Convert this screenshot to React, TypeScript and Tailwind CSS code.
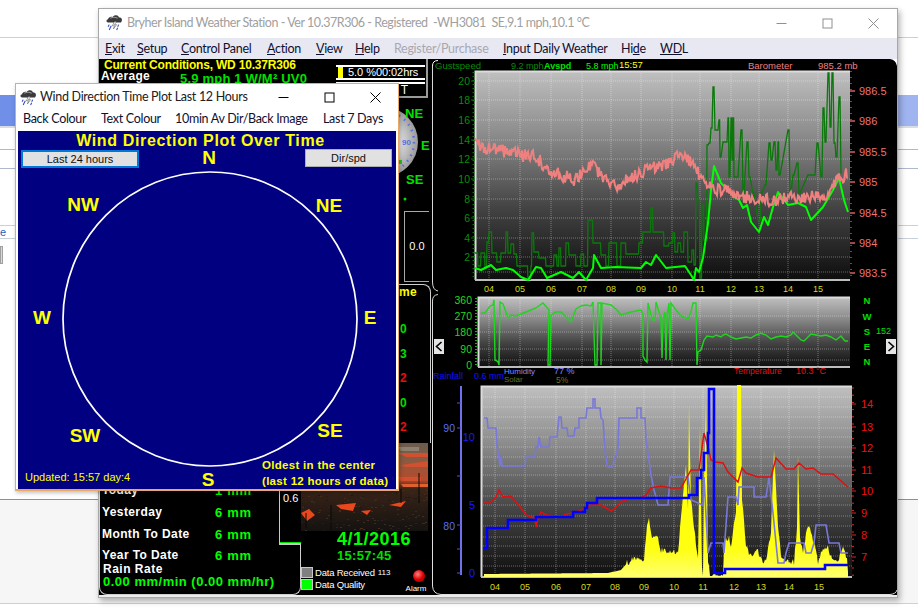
import React from "react";

type P = [number, number];
const SANS = "Liberation Sans, sans-serif";

function mkRnd(seed: number) {
  let s = seed;
  return () => {
    s = (s * 16807) % 2147483647;
    return s / 2147483647;
  };
}
function interp(k: P[], x: number) {
  for (let i = 1; i < k.length; i++) {
    if (x <= k[i][0]) {
      const [a, b] = k[i - 1];
      const [c, d] = k[i];
      return b + ((d - b) * (x - a)) / Math.max(c - a, 0.01);
    }
  }
  return k[k.length - 1][1];
}
const pts = (a: P[]) => a.map((p) => p.join(",")).join(" ");
const steps = (a: P[]) => "M" + a[0].join(" ") + a.slice(1).map((p) => ` H${p[0]} V${p[1]}`).join("");
const plateaus = (a: P[]) => {
  const o: P[] = [];
  a.forEach(([x, y], i) => {
    const next = i + 1 < a.length ? a[i + 1][0] : x + 1;
    const end = y < 200 ? Math.min(x + 1, next - 0.4) : next - 0.5;
    o.push([x, y], [end, y]);
  });
  return o;
};

const baroKeys: P[] = [[474,145],[490,148],[519,155],[535,157],[550,172],[575,180],[590,165],[600,175],[615,187],[640,172],[660,165],[673,160],[683,153],[697,173],[710,187],[743,197],[770,200],[803,197],[823,197],[833,183],[846,173]];
const baro: P[] = (() => {
  const r = mkRnd(77);
  const o: P[] = [];
  for (let x = 474; x <= 846; x += 1) o.push([x, interp(baroKeys, x) + (r() - 0.5) * 13]);
  return o;
})();
const avg: P[] = [[474,268],[480,270],[490,265],[495,270],[505,268],[512,270],[520,277],[527,280],[535,267],[540,268],[546,278],[560,272],[572,278],[578,272],[585,280],[592,268],[593,255],[600,268],[615,267],[640,268],[645,262],[650,265],[655,255],[665,268],[684,266],[690,275],[693,280],[695,268],[698,272],[702,258],[707,223],[710,190],[713,166],[720,183],[727,190],[733,197],[738,200],[742,208],[746,205],[750,222],[758,232],[763,217],[767,225],[772,207],[777,192],[787,205],[797,203],[805,207],[810,220],[822,207],[832,190],[838,178],[843,200],[847,212]];
const gust: P[] = [[474,253],[477,266],[480,253],[484,268],[486,242],[488,232],[491,253],[496,262],[500,253],[505,232],[507,253],[510,244],[513,254],[516,266],[527,279],[530,266],[531,233],[533,252],[538,258],[545,266],[552,266],[553,255],[556,266],[558,248],[560,266],[565,243],[568,255],[572,255],[575,266],[580,254],[583,266],[587,220],[592,243],[598,243],[600,255],[605,266],[608,243],[612,243],[616,266],[620,243],[625,254],[633,254],[638,243],[642,232],[650,208],[652,232],[660,232],[663,246],[668,243],[672,233],[674,252],[677,243],[680,252],[683,232],[687,262],[691,250],[693,265],[695,183],[697,200],[699,278],[701,205],[703,240],[706,145],[708,143],[710,128],[712,87],[714,130],[716,130],[718,120],[719,157],[722,142],[725,142],[727,118],[728,177],[730,118],[731,160],[732,118],[733,177],[736,177],[740,130],[742,193],[746,142],[748,177],[752,193],[757,220],[760,193],[764,185],[768,143],[770,160],[773,142],[775,170],[777,142],[778,175],[787,130],[789,193],[792,175],[796,163],[798,193],[807,175],[813,175],[816,143],[820,177],[822,108],[824,142],[827,73],[829,127],[831,73],[833,143],[835,157],[838,97],[840,173]];
const dir: P[] = [[480,313],[484,313],[489,306],[492,305],[493,300],[494,360],[496,361],[497,362],[498,365],[499,302],[502,304],[505,312],[507,318],[510,315],[515,316],[520,314],[525,312],[530,310],[535,308],[542,303],[548,310],[547,365],[549,365],[550,315],[555,312],[560,312],[568,320],[570,322],[575,309],[580,306],[585,305],[590,306],[592,302],[594,365],[596,365],[597,303],[600,303],[600,365],[601,303],[610,305],[616,310],[620,315],[630,312],[640,310],[642,315],[642,356],[644,360],[646,362],[647,303],[650,315],[652,320],[654,320],[655,302],[658,312],[660,320],[661,358],[662,320],[664,312],[665,360],[666,315],[668,303],[669,360],[670,303],[675,310],[680,316],[685,318],[687,319],[690,312],[692,303],[695,303],[696,365],[697,352],[700,350],[703,340],[706,336],[712,337],[715,335],[720,337],[722,335],[725,334],[730,337],[735,339],[740,338],[745,337],[750,338],[755,335],[760,333],[762,334],[765,335],[770,339],[775,337],[780,336],[785,337],[790,335],[792,332],[796,336],[800,340],[803,341],[806,338],[810,334],[815,335],[820,336],[825,335],[830,337],[835,340],[840,336],[844,341],[847,341]];
const hum: P[] = [[483,418],[486,418],[487,428],[495,428],[496,446],[498,458],[499,466],[500,456],[501,466],[524,466],[525,457],[534,457],[535,447],[537,447],[538,437],[540,447],[548,447],[549,437],[556,437],[558,417],[560,417],[561,428],[566,428],[567,436],[573,436],[574,428],[578,428],[578,418],[585,418],[586,408],[592,408],[592,399],[594,399],[594,408],[599,408],[600,418],[602,420],[603,435],[604,450],[606,465],[607,467],[612,467],[613,460],[615,455],[617,448],[618,418],[636,418],[636,408],[640,408],[640,418],[644,418],[645,440],[648,460],[650,475],[653,490],[655,497],[657,505],[667,505],[669,477],[687,477],[690,500],[702,505],[703,477],[707,553],[710,543],[722,543],[723,553],[727,497],[735,497],[737,505],[738,487],[753,487],[753,497],[765,497],[768,477],[772,513],[777,563],[783,563],[785,553],[788,543],[803,543],[805,553],[810,553],[813,543],[815,525],[825,525],[828,543],[838,543],[840,553],[847,553]];
const temp: P[] = [[483,502],[490,502],[495,497],[498,490],[502,497],[510,496],[515,502],[520,508],[525,515],[530,517],[534,518],[535,527],[537,518],[540,512],[545,515],[555,516],[560,517],[565,514],[572,513],[580,510],[585,508],[590,505],[600,505],[605,508],[610,511],[614,508],[620,502],[630,498],[640,498],[645,495],[650,488],[660,486],[670,488],[680,488],[690,470],[698,470],[703,433],[707,447],[710,460],[715,462],[722,463],[727,472],[737,482],[741,468],[745,473],[757,477],[770,477],[775,458],[785,469],[793,469],[798,463],[805,469],[812,468],[820,474],[832,474],[847,487]];
const rain: P[] = [[483,548],[486,528],[507,520],[535,517],[572,512],[584,508],[586,503],[596,498],[688,495],[696,478],[700,470],[703,453],[707,433],[708,389],[713,573],[724,569],[824,565],[847,565]];
const sunKeys: P[] = [[483,574],[607,573],[620,570],[627,562],[630,560],[640,558],[643,561],[646,523],[648,520],[650,535],[657,540],[660,550],[670,552],[677,552],[680,515],[685,465],[687,510],[688,405],[690,500],[697,560],[699,425],[701,565],[702,575],[703,480],[705,400],[707,560],[709,575],[722,575],[723,545],[728,535],[730,548],[735,510],[736,385],[740,385],[741,500],[745,545],[748,555],[757,552],[760,560],[765,562],[770,530],[773,450],[777,525],[780,555],[787,560],[793,562],[796,530],[797,455],[799,540],[802,550],[805,535],[808,525],[812,540],[817,562],[822,548],[827,548],[830,558],[837,560],[842,545],[846,560],[847,575]];
const sun: P[] = (() => {
  const r = mkRnd(311);
  const o: P[] = [[483, 577]];
  for (let x = 483; x <= 847; x++) {
    const y = interp(sunKeys, x);
    o.push([x, y > 500 && x > 625 ? Math.min(576, y + (r() - 0.5) * 7) : y]);
  }
  o.push([847, 577]);
  return o;
})();

const hoursA = [488, 519, 550, 581, 610, 640, 671, 699, 730, 758, 787, 817];
const hoursC = [494, 524, 555, 585, 614, 643, 673, 702, 733, 760, 788, 818];
const hourNames = ["04","05","06","07","08","09","10","11","12","13","14","15"];

function Cloud({ className }: { className: string }) {
  return (
    <svg viewBox="0 0 16 16" className={className}>
      <path d="M2 8 C0 8 0 5 2 5 C2 3 5 2 6 3 C8 0 12 1 12 3 C15 3 16 6 14 8 Z" fill="#3a3a3a" />
      <path d="M4 4 C6 3 9 3 11 4" stroke="#9a9a9a" strokeWidth="1" fill="none" />
      <path d="M8 7 L6 11 L8 11 L7 14 L10 10 L8 10 L10 7 Z" fill="#f8f8f8" stroke="#222" strokeWidth="0.4" />
      <path d="M3 10 L2 12 M5 11 L4 13 M4 13 L3 15 M12 10 L11 12 M11 13 L10 15" stroke="#3048c8" strokeWidth="1" />
    </svg>
  );
}

function WinControls({ color }: { color: string }) {
  return (
    <div className="flex items-center gap-[35px]">
      <svg width="11" height="11" viewBox="0 0 11 11"><path d="M0.5 5.5 H10.5" stroke={color} /></svg>
      <svg width="11" height="11" viewBox="0 0 11 11"><rect x="1" y="1" width="9" height="9" fill="none" stroke={color} /></svg>
      <svg width="11" height="11" viewBox="0 0 11 11"><path d="M0.5 0.5 L10.5 10.5 M10.5 0.5 L0.5 10.5" stroke={color} /></svg>
    </div>
  );
}

function MenuItem({ pre = "", u, post, dim, w }: { pre?: string; u?: string; post: string; dim?: boolean; w: string }) {
  return (
    <span className={`${w} shrink-0 ${dim ? "text-[#a8a8b0]" : "text-[#101030]"}`}>
      {pre}
      {u && <span className="underline">{u}</span>}
      {post}
    </span>
  );
}

function Defs({ id }: { id: string }) {
  return (
    <defs>
      <linearGradient id={id} x1="0" y1="0" x2="0" y2="1">
        <stop offset="0" stopColor="#c0c0c0" />
        <stop offset="0.3" stopColor="#8c8c8c" />
        <stop offset="0.65" stopColor="#444444" />
        <stop offset="1" stopColor="#0e0e0e" />
      </linearGradient>
    </defs>
  );
}

function Plot({ id, x, y, w, h, vx, hy }: { id: string; x: number; y: number; w: number; h: number; vx: number[]; hy: number[] }) {
  return (
    <g>
      <rect x={x} y={y} width={w} height={h} fill={`url(#${id})`} />
      {vx.map((v) => (
        <line key={v} x1={v} x2={v} y1={y} y2={y + h} stroke="#ffffff" strokeOpacity="0.35" strokeDasharray="1 1" />
      ))}
      {hy.map((v) => (
        <line key={v} x1={x} x2={x + w} y1={v} y2={v} stroke="#ffffff" strokeOpacity="0.35" strokeDasharray="1 1" />
      ))}
      <path d={`M${x + 0.5} ${y + h} V${y + 0.5} H${x + w}`} fill="none" stroke="#dcdcdc" strokeWidth="2" />
      <path d={`M${x} ${y + h} H${x + w}`} fill="none" stroke="#bdbdbd" strokeWidth="2" />
    </g>
  );
}

function TopChart() {
  const left: [string, number][] = [["20",81],["18",100],["16",120],["14",140],["12",159],["10",179],["8",199],["6",218],["4",238],["2",257]];
  const right: [string, number][] = [["986.5",91],["986",121],["985.5",152],["985",182],["984.5",213],["984",243],["983.5",273]];
  return (
    <svg viewBox="430 59 467 235" className="w-[467px] h-[235px] block shrink-0" fontFamily={SANS}>
      <Defs id="ga" />
      <path d="M431.5 72 V66 Q431.5 60.5 437 60.5" stroke="#ffffff" fill="none" />
      <path d="M431.5 66 V282 Q431.5 290 437 291" stroke="#d8d8d8" fill="none" />
      <path d="M889 59 Q895 60 896 66 L896 59 Z" fill="#ffffff" />
      <text x="434" y="69" fontSize="9.5" fill="#0b8a0b">Gustspeed</text>
      <text x="510" y="69" fontSize="9" fill="#0b8a0b">9.2 mph</text>
      <text x="543" y="69" fontSize="9" fontWeight="bold" fill="#00e000">Avspd</text>
      <text x="585" y="69" fontSize="9" fill="#00ff00">5.8 mph</text>
      <text x="618" y="68" fontSize="9.5" fill="#ffff20">15:57</text>
      <text x="747" y="69" fontSize="9.5" fill="#f08080">Barometer</text>
      <text x="817" y="69" fontSize="9.5" fill="#f08080">985.2 mb</text>
      <Plot id="ga" x={474} y={71} w={375} h={209} vx={hoursA} hy={[81,100,120,140,159,179,199,218,238,257,272]} />
      <line x1="472.5" x2="472.5" y1="72" y2="278" stroke="#0b7a0b" strokeWidth="2" strokeDasharray="1 3" />
      {left.map(([t, y]) => (
        <g key={t}>
          <text x="469" y={y + 3.5} textAnchor="end" fontSize="10.5" fill="#0c8c0c">{t}</text>
          <line x1="470" x2="474" y1={y} y2={y} stroke="#0b7a0b" />
        </g>
      ))}
      <line x1="850" x2="850" y1="71" y2="280" stroke="#c05050" strokeWidth="1.5" strokeDasharray="1 5" />
      {right.map(([t, y]) => (
        <g key={t}>
          <line x1="849" x2="854" y1={y} y2={y} stroke="#d06060" strokeWidth="1.5" />
          <text x="858" y={y + 4} fontSize="11" fill="#f07070">{t}</text>
        </g>
      ))}
      <polyline points={pts(plateaus(gust))} fill="none" stroke="#0c780c" strokeWidth="1.3" />
      <polyline points={pts(avg)} fill="none" stroke="#00ff00" strokeWidth="2" strokeLinejoin="round" />
      <polyline points={pts(baro)} fill="none" stroke="#ef8080" strokeWidth="2" />
      {hourNames.map((h, i) => (
        <text key={h} x={hoursA[i]} y="292" textAnchor="middle" fontSize="9" fill="#d8d820">{h}</text>
      ))}
    </svg>
  );
}

function MidChart() {
  const left: [string, number][] = [["360",300],["270",316],["180",332],["90",349],["0",365]];
  const right: [string, number][] = [["N",300],["W",316],["S",331],["E",346],["N",361]];
  return (
    <svg viewBox="430 294 467 89" className="w-[467px] h-[89px] block shrink-0 overflow-visible" fontFamily={SANS}>
      <Defs id="gb" />
      <path d="M437 294.5 Q431.5 295 431.5 301 V383" stroke="#d8d8d8" fill="none" />
      <Plot id="gb" x={477} y={297} w={372} h={70} vx={hoursA} hy={[316,332,349,360]} />
      <line x1="475" x2="475" y1="298" y2="366" stroke="#18b018" strokeWidth="2" strokeDasharray="1 2" />
      {left.map(([t, y]) => (
        <text key={t} x="471" y={y + 4} textAnchor="end" fontSize="10.5" fill="#20d820">{t}</text>
      ))}
      {right.map(([t, y], i) => (
        <text key={i} x="866" y={y + 3.5} textAnchor="middle" fontSize="9.5" fontWeight="bold" fill="#00e000">{t}</text>
      ))}
      <text x="875" y="334" fontSize="9" fill="#00e000">152</text>
      <polyline points={pts(dir)} fill="none" stroke="#1ed61e" strokeWidth="1.4" />
      <rect x="433" y="339" width="10" height="15" fill="#e4e4e4" />
      <path d="M440.5 342 L435.5 346.5 L440.5 351" fill="none" stroke="#000" strokeWidth="1.6" />
      <rect x="885" y="339" width="10" height="15" fill="#e4e4e4" />
      <path d="M887.5 342 L892.5 346.5 L887.5 351" fill="none" stroke="#000" strokeWidth="1.6" />
      <text x="432" y="379" fontSize="9" fill="#1010ff">Rainfall</text>
      <text x="473" y="379" fontSize="9" fill="#1010ff">0.6 mm</text>
      <text x="503" y="374" fontSize="8" fill="#8a8aff">Humidity</text>
      <text x="553" y="374" fontSize="9" fill="#8a8aff">77 %</text>
      <text x="503" y="382" fontSize="8" fill="#707020">Solar</text>
      <text x="555" y="383" fontSize="8.5" fill="#707020">5%</text>
      <text x="733" y="374" fontSize="8.5" fill="#e81010">Temperature</text>
      <text x="795" y="374" fontSize="9" fill="#e81010">10.3 °C</text>
    </svg>
  );
}

function BotChart() {
  const right: [string, number][] = [["14",404],["13",427],["12",448],["11",470],["10",491],["9",513],["8",535],["7",557]];
  const rTicks: number[] = [];
  for (let y = 388; y < 577; y += 7.2) rTicks.push(y);
  return (
    <svg viewBox="430 383 467 212" className="w-[467px] h-[212px] block shrink-0" fontFamily={SANS}>
      <Defs id="gc" />
      <defs>
        <linearGradient id="gs" x1="0" y1="0" x2="0" y2="1">
          <stop offset="0" stopColor="#ffff00" />
          <stop offset="0.85" stopColor="#ffff10" />
          <stop offset="1" stopColor="#ffff70" />
        </linearGradient>
      </defs>
      <path d="M431.5 383 V586 Q432 594 440 594.5 H889 Q895 594 896 590" stroke="#e0e0e0" fill="none" />
      <Plot id="gc" x={480} y={386} w={371} h={191} vx={hoursC} hy={[397,407,417,428,437,447,457,466,475,486,496,505,516,526,537,546,556,566]} />
      <line x1="460" x2="460" y1="386" y2="575" stroke="#7070f0" strokeWidth="2" />
      {[403, 428, 476, 525, 549, 573].map((y) => (
        <line key={y} x1="456" x2="460" y1={y} y2={y} stroke="#5858c0" />
      ))}
      <text x="454" y="432" textAnchor="end" fontSize="10.5" fill="#5870f0">90</text>
      <text x="454" y="530" textAnchor="end" fontSize="10.5" fill="#5870f0">80</text>
      {([["10",441],["5",509],["0",577]] as [string, number][]).map(([t, y]) => (
        <text key={t} x="474" y={y} textAnchor="end" fontSize="11" fill="#1818ff">{t}</text>
      ))}
      {rTicks.map((y) => (
        <line key={y} x1="851" x2="853" y1={y} y2={y} stroke="#d03030" />
      ))}
      {right.map(([t, y]) => (
        <g key={t}>
          <line x1="851" x2="855" y1={y} y2={y} stroke="#e02020" />
          <text x="860" y={y + 4} fontSize="11" fill="#f01010">{t}</text>
        </g>
      ))}
      <polygon points={pts(sun)} fill="url(#gs)" />
      <polyline points={pts(hum)} fill="none" stroke="#7878d8" strokeWidth="1.6" />
      <polyline points={pts(temp)} fill="none" stroke="#e01010" strokeWidth="1.5" />
      <path d={steps(rain)} fill="none" stroke="#0000ff" strokeWidth="2.6" />
      {hourNames.map((h, i) => (
        <text key={h} x={hoursC[i]} y="590" textAnchor="middle" fontSize="9" fill="#d8d820">{h}</text>
      ))}
    </svg>
  );
}

const speckle = (() => {
  const r = mkRnd(4242);
  const o: { x: number; y: number; c: string }[] = [];
  const cols = ["#2a221c", "#3a2c22", "#1c1814", "#4a2a1a", "#221e1a"];
  for (let i = 0; i < 200; i++) {
    o.push({ x: Math.floor(r() * 127), y: 47 + Math.floor(r() * 41), c: cols[Math.floor(r() * 5)] });
  }
  return o;
})();

function Sunset() {
  return (
    <svg viewBox="0 0 127 88" className="w-[127px] h-[88px] block" preserveAspectRatio="none">
      <defs>
        <linearGradient id="sky" x1="0" y1="0" x2="0" y2="1">
          <stop offset="0" stopColor="#6a5c4e" />
          <stop offset="0.2" stopColor="#8a5a42" />
          <stop offset="0.42" stopColor="#b84a2a" />
          <stop offset="0.52" stopColor="#3a2418" />
          <stop offset="1" stopColor="#141210" />
        </linearGradient>
      </defs>
      <rect width="127" height="88" fill="url(#sky)" />
      {speckle.map((s, i) => (
        <rect key={i} x={s.x} y={s.y} width="2" height="1" fill={s.c} />
      ))}
      <path d="M97 10 H127 V14 H105 Z M100 22 L127 18 V24 H104 Z M97 34 H120 V38 H100 Z" fill="#d05030" />
      <path d="M97 4 H118 V8 H100 Z" fill="#8c8070" />
      <path d="M100 41 H127 V44 H102 Z" fill="#e06030" />
      <path d="M0 70 L8 66 L14 72 L6 78 Z M35 62 L55 60 L52 68 L40 66 Z M88 62 L105 58 L100 64 Z M60 68 L70 67 L66 72 Z" fill="#e8481c" />
      <path d="M5 87 V70 M30 87 V62 M100 60 V46 M118 60 V30" stroke="#0a0806" />
    </svg>
  );
}

function RainRow({ label, value, cls }: { label: string; value?: string; cls: string }) {
  return (
    <div className={`flex items-center ${cls}`}>
      <span className="w-[113px] text-white font-bold text-[12px] tracking-[0.4px]">{label}</span>
      {value && <span className="text-[#00ff00] font-bold text-[13px] tracking-[0.7px]">{value}</span>}
    </div>
  );
}

function LeftColumn() {
  return (
    <div className="w-[332px] shrink-0 flex flex-col font-['Liberation_Sans',sans-serif] leading-none">
      <div className="h-[38px] flex justify-between pr-[3px]">
        <div className="pl-[2px] overflow-hidden">
          <div className="pl-[3px] pt-[1px] text-[#ffff00] font-bold text-[12px] tracking-[-0.2px] whitespace-nowrap leading-[11px] h-[12px]">Current Conditions, WD 10.37R306</div>
          <div className="flex items-start whitespace-nowrap">
            <span className="w-[79px] text-white font-bold text-[12px] tracking-[0.3px] leading-[11px]">Average</span>
            <span className="text-[#00e000] font-bold text-[13px] tracking-[0.2px] leading-[14px] pt-[1px]">5.9 mph 1 W/M² UV0</span>
          </div>
        </div>
        <div className="w-[92px] pt-[6px] flex flex-col border-b-2 border-r-2 border-[#9a9a9a] h-[39px] pr-[1px]">
          <div className="h-[15px] bg-black border-t-2 border-b-2 border-white flex items-center">
            <span className="ml-[2px] w-[5px] h-[11px] bg-[#ffff00]" />
            <span className="ml-[5px] text-white text-[11px] tracking-[-0.05px]">5.0 %00:02hrs</span>
          </div>
          <div className="mt-[2px] h-[13px] bg-black border-t-2 border-white flex justify-end pr-[17px]">
            <span className="text-white text-[12px]">T</span>
          </div>
        </div>
      </div>

      <div className="h-[346px] flex justify-end">
        <div className="w-[32px] flex flex-col items-stretch">
          <svg viewBox="398 97 32 111" className="w-[32px] h-[111px] block" fontFamily={SANS}>
            <defs>
              <radialGradient id="dial" cx="0.5" cy="0.5" r="0.5">
                <stop offset="0.5" stopColor="#dcdcdc" />
                <stop offset="1" stopColor="#9a9a9a" />
              </radialGradient>
            </defs>
            <circle cx="382" cy="142" r="35" fill="url(#dial)" />
            <circle cx="382" cy="142" r="31" fill="none" stroke="#5a6ee0" strokeWidth="2.5" strokeDasharray="1.5 5" />
            <text x="401" y="145" fontSize="8" fill="#5a6ee0" fontWeight="bold">90</text>
            <rect x="398" y="160" width="3" height="4" fill="#20c020" />
            <text x="404" y="118" fontSize="13" fontWeight="bold" fill="#00e000">NE</text>
            <text x="420" y="150" fontSize="13" fontWeight="bold" fill="#00e000">E</text>
            <text x="405" y="184" fontSize="13" fontWeight="bold" fill="#00e000">SE</text>
            <circle cx="404" cy="199" r="1.5" fill="#00e000" />
          </svg>
          <div className="mt-[3px] ml-[5px] w-[25px] h-[71px] border border-[#a8a8a8] border-r-0 flex items-center justify-center text-white text-[11px]">0.0</div>
          <div className="mt-[2px] flex-1 border-t border-r border-[#d0d0d0] rounded-tr-[8px] font-bold text-[12px] tracking-[0.3px]">
            <div className="-ml-[12px] w-[30px] text-right text-[#ffff00] pt-[1px]">Time</div>
            <div className="pl-[1px] mt-[25px] flex flex-col gap-[12.5px]">
              <span className="text-[#00e000]">0</span>
              <span className="text-[#00e000]">3</span>
              <span className="text-[#e81010]">2</span>
              <span className="text-[#00e000]">0</span>
              <span className="text-[#e81010]">2</span>
            </div>
          </div>
        </div>
      </div>

      <div className="h-[152px] flex">
        <div className="w-[202px] flex flex-col shrink-0">
          <div className="h-[102px] flex">
            <div className="w-[180px] border-l border-[#d0d0d0] pl-[2px] pt-[41px] flex flex-col">
              <RainRow label="Today" value="1 mm" cls="h-[12px]" />
              <RainRow label="Yesterday" value="6 mm" cls="mt-[10px] h-[12px]" />
              <RainRow label="Month To Date" value="6 mm" cls="mt-[10px] h-[12px]" />
            </div>
            <div className="w-[22px] border-l border-b-2 border-[#c8c8c8] text-white text-[11px] pl-[3px] pt-[50px] relative">
              0.6
              <span className="absolute left-0 right-0 bottom-0 h-px bg-[#00e000]" />
            </div>
          </div>
          <div className="flex-1 border-l border-b border-r border-[#d0d0d0] rounded-b-[8px] pl-[2px] pt-[4px] flex flex-col">
            <RainRow label="Year To Date" value="6 mm" cls="h-[12px]" />
            <div className="mt-[2px] pl-[1px] text-white font-bold text-[12px] tracking-[0.5px] leading-[12px]">Rain Rate</div>
            <div className="pl-[1px] text-[#00ff00] font-bold text-[13px] tracking-[0.5px] whitespace-nowrap leading-[14px]">0.00 mm/min (0.00 mm/hr)</div>
          </div>
        </div>
        <div className="w-[127px] flex flex-col">
          <Sunset />
          <div className="pl-[36px] text-[#00ff00] font-bold text-[18px] tracking-[0.5px] leading-[16px]">4/1/2016</div>
          <div className="pl-[36px] mt-[2px] text-[#00e000] font-bold text-[13px] tracking-[0.3px] leading-[14px]">15:57:45</div>
          <div className="flex mt-[4px]">
            <div className="flex-1 flex flex-col gap-[1px] text-white text-[9.5px] tracking-[-0.2px]">
              <div className="flex items-center gap-[2px] whitespace-nowrap">
                <span className="w-[12px] h-[11px] bg-[#808080] border border-[#c8c8c8]" />
                Data Received <span className="ml-px text-[8px] tracking-normal">113</span>
              </div>
              <div className="flex items-center gap-[2px]">
                <span className="w-[12px] h-[11px] bg-[#00ff00] border border-[#c8c8c8]" />
                Data Quality
              </div>
            </div>
            <div className="w-[24px] flex flex-col items-center text-white text-[8px] pl-[5px] pt-[3px]">
              <span className="w-[12px] h-[12px] rounded-full bg-[radial-gradient(circle_at_40%_35%,#ff8080,#e00000_50%,#800000)]" />
              <span className="mt-[3px] -ml-[5px]">Alarm</span>
            </div>
          </div>
        </div>
      </div>
    </div>
  );
}

function MainWindow() {
  return (
    <div className="absolute left-[98px] top-[8px] w-[800px] h-[590px] flex flex-col bg-[#ececec] border border-[#a8a8a8] shadow-[2px_3px_6px_rgba(0,0,0,0.3)]">
      <div className="h-[29px] bg-white flex items-center pl-[7px] pr-[18px] shrink-0">
        <Cloud className="w-[17px] h-[17px] shrink-0 -mt-[3px]" />
        <span className="ml-[4px] font-['Lato',sans-serif] text-[12.5px] tracking-[-0.45px] text-[#a0a0a0] whitespace-pre">Bryher Island Weather Station - Ver 10.37R306 - Registered  -WH3081  SE,9.1 mph,10.1 °C</span>
        <div className="ml-auto"><WinControls color="#909090" /></div>
      </div>
      <div className="h-[21px] pt-px bg-[#e8e8f3] flex items-center pl-[6px] font-['Lato',sans-serif] text-[12.5px] tracking-[-0.3px] whitespace-nowrap shrink-0">
        <MenuItem u="E" post="xit" w="w-[32px]" />
        <MenuItem u="S" post="etup" w="w-[44px]" />
        <MenuItem u="C" post="ontrol Panel" w="w-[86px]" />
        <MenuItem u="A" post="ction" w="w-[49px]" />
        <MenuItem u="V" post="iew" w="w-[39px]" />
        <MenuItem u="H" post="elp" w="w-[39px]" />
        <MenuItem post="Register/Purchase" dim w="w-[109px]" />
        <MenuItem u="I" post="nput Daily Weather" w="w-[118px]" />
        <MenuItem pre="Hi" u="d" post="e" w="w-[39px]" />
        <MenuItem u="WD" post="L" w="w-[30px]" />
      </div>
      <div className="h-[536px] bg-black flex overflow-hidden shrink-0">
        <LeftColumn />
        <div className="flex flex-col w-[467px] shrink-0">
          <TopChart />
          <MidChart />
          <BotChart />
        </div>
      </div>
    </div>
  );
}

function PlotWindow() {
  return (
    <div className="absolute left-[15px] top-[83px] w-[384px] h-[408px] flex flex-col bg-white border border-[#e8a868] border-b-2 shadow-[1px_2px_4px_rgba(0,0,0,0.25)]">
      <div className="h-[26px] flex items-center pl-[4px] pr-[17px] shrink-0">
        <Cloud className="w-[17px] h-[17px] shrink-0" />
        <span className="ml-[3px] font-['Lato',sans-serif] text-[12.5px] tracking-[-0.3px] text-[#202020] whitespace-nowrap">Wind Direction Time Plot Last 12 Hours</span>
        <div className="ml-auto"><WinControls color="#000000" /></div>
      </div>
      <div className="h-[19px] flex items-center pl-[7px] font-['Lato',sans-serif] text-[12.5px] tracking-[-0.3px] text-[#101030] whitespace-nowrap shrink-0">
        <span className="w-[78px]">Back Colour</span>
        <span className="w-[74px]">Text Colour</span>
        <span className="w-[148px]">10min Av Dir/Back Image</span>
        <span>Last 7 Days</span>
      </div>
      <div className="mx-[2px] mt-[2px] flex-1 bg-[#000080] relative font-['Liberation_Sans',sans-serif] text-[#ffff00] leading-none">
        <div className="pt-[2px] text-center font-bold text-[16px] tracking-[0.65px] pr-[13px] h-[18px]">Wind Direction Plot Over Time</div>
        <div className="flex justify-between pl-[3px] pr-[4px]">
          <div className="w-[118px] h-[18px] mt-[1px] bg-[#e1e1e1] border-2 border-[#0078d7] text-[#101010] text-[11px] flex items-center justify-center">Last 24 hours</div>
          <div className="w-[87px] h-[18px] bg-[#e1e1e1] border border-[#adadad] text-[#101010] text-[11px] flex items-center justify-center">Dir/spd</div>
        </div>
        <svg viewBox="18 131 378 357" className="absolute inset-0 w-full h-full" fontFamily={SANS}>
          <circle cx="210" cy="318.5" r="147" fill="none" stroke="#ffffff" strokeWidth="1.7" />
          <g fill="#ffff00" fontWeight="bold" fontSize="19" textAnchor="middle">
            <text x="209" y="163">N</text>
            <text x="83" y="210">NW</text>
            <text x="329" y="211">NE</text>
            <text x="42" y="323">W</text>
            <text x="370" y="323">E</text>
            <text x="85" y="441">SW</text>
            <text x="330" y="436">SE</text>
            <text x="208" y="485">S</text>
          </g>
          <text x="25" y="480" fontSize="11" fill="#ffff00">Updated: 15:57 day:4</text>
          <g fill="#ffff00" fontWeight="bold" fontSize="11.5">
            <text x="262" y="468" letterSpacing="0.3">Oldest in the center</text>
            <text x="262" y="484" letterSpacing="0.3">(last 12 hours of data)</text>
          </g>
        </svg>
      </div>
    </div>
  );
}

function Desktop() {
  return (
    <>
      <div className="absolute left-0 top-[37px] w-full h-px bg-[#cfcfcf]" />
      <div className="absolute left-0 top-[95px] w-full h-[31px] bg-[linear-gradient(90deg,#6f8fe8,#a0b4f0)]" />
      <div className="absolute left-0 top-[126px] w-full h-[2px] bg-[#d8dce4]" />
      <div className="absolute left-0 top-[149px] w-full h-px bg-[#b0b8c8]" />
      <div className="absolute left-0 top-[168px] w-full h-px bg-[#b0b8d0]" />
      <div className="absolute left-0 top-[225px] w-full h-px bg-[#c8d0d8]" />
      <div className="absolute left-0 top-[224px] text-[#2060c0] text-[11px] font-['Liberation_Sans',sans-serif]">e</div>
      <div className="absolute left-0 top-[238px] w-full h-px bg-[#c8d0d8]" />
      <div className="absolute left-0 top-[246px] w-[3px] h-[18px] bg-[#d8d8d8] border border-[#a0a0a0]" />
      <div className="absolute left-0 top-[499px] w-full h-[104px] bg-[#f6f6f6] border-t border-[#909090]" />
      <div className="absolute left-0 top-[603px] w-full h-px bg-[#c8d4d4]" />
    </>
  );
}

export default function App() {
  return (
    <div className="relative w-[918px] h-[609px] bg-white overflow-hidden">
      <Desktop />
      <MainWindow />
      <PlotWindow />
    </div>
  );
}
